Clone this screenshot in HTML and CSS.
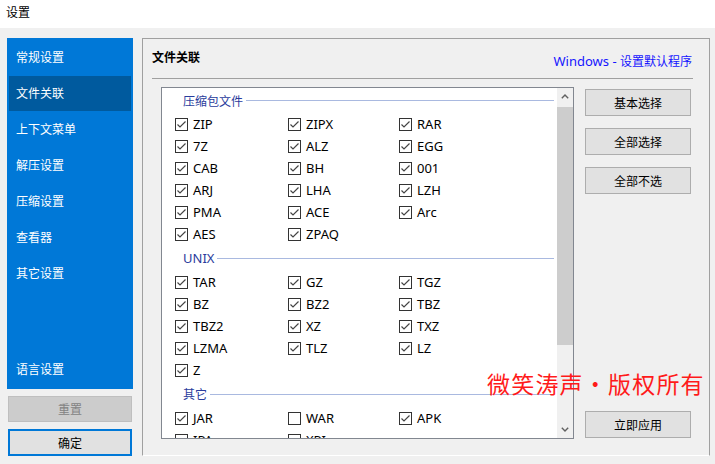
FILE: index.html
```html
<!DOCTYPE html>
<html lang="zh-CN">
<head>
<meta charset="utf-8">
<title>设置</title>
<link rel="stylesheet" href="styles.css">
</head>
<body>
<div class="window">
  <div class="titlebar">设置</div>
  <div class="main">
    <aside class="sidebar">
      <nav class="nav">
        <div class="nav-item">常规设置</div>
        <div class="nav-item active">文件关联</div>
        <div class="nav-item">上下文菜单</div>
        <div class="nav-item">解压设置</div>
        <div class="nav-item">压缩设置</div>
        <div class="nav-item">查看器</div>
        <div class="nav-item">其它设置</div>
        <div class="nav-item nav-bottom">语言设置</div>
      </nav>
      <button class="btn btn-reset">重置</button>
      <button class="btn btn-ok">确定</button>
    </aside>
    <section class="panel">
      <header class="panel-head">
        <h1 class="panel-title">文件关联</h1>
        <a class="panel-link"><span class="latin">Windows - </span>设置默认程序</a>
      </header>
      <div class="panel-body">
        <div class="listbox">
          <div class="list-content">
            <div class="group-head first"><span>压缩包文件</span></div>
            <div class="grid">
              <label class="cb"><span class="box"><svg viewBox="0 0 11 11"><path d="M1.5 5.5 L4 8 L9.5 2.5"/></svg></span>ZIP</label>
              <label class="cb"><span class="box"><svg viewBox="0 0 11 11"><path d="M1.5 5.5 L4 8 L9.5 2.5"/></svg></span>ZIPX</label>
              <label class="cb"><span class="box"><svg viewBox="0 0 11 11"><path d="M1.5 5.5 L4 8 L9.5 2.5"/></svg></span>RAR</label>
              <label class="cb"><span class="box"><svg viewBox="0 0 11 11"><path d="M1.5 5.5 L4 8 L9.5 2.5"/></svg></span>7Z</label>
              <label class="cb"><span class="box"><svg viewBox="0 0 11 11"><path d="M1.5 5.5 L4 8 L9.5 2.5"/></svg></span>ALZ</label>
              <label class="cb"><span class="box"><svg viewBox="0 0 11 11"><path d="M1.5 5.5 L4 8 L9.5 2.5"/></svg></span>EGG</label>
              <label class="cb"><span class="box"><svg viewBox="0 0 11 11"><path d="M1.5 5.5 L4 8 L9.5 2.5"/></svg></span>CAB</label>
              <label class="cb"><span class="box"><svg viewBox="0 0 11 11"><path d="M1.5 5.5 L4 8 L9.5 2.5"/></svg></span>BH</label>
              <label class="cb"><span class="box"><svg viewBox="0 0 11 11"><path d="M1.5 5.5 L4 8 L9.5 2.5"/></svg></span>001</label>
              <label class="cb"><span class="box"><svg viewBox="0 0 11 11"><path d="M1.5 5.5 L4 8 L9.5 2.5"/></svg></span>ARJ</label>
              <label class="cb"><span class="box"><svg viewBox="0 0 11 11"><path d="M1.5 5.5 L4 8 L9.5 2.5"/></svg></span>LHA</label>
              <label class="cb"><span class="box"><svg viewBox="0 0 11 11"><path d="M1.5 5.5 L4 8 L9.5 2.5"/></svg></span>LZH</label>
              <label class="cb"><span class="box"><svg viewBox="0 0 11 11"><path d="M1.5 5.5 L4 8 L9.5 2.5"/></svg></span>PMA</label>
              <label class="cb"><span class="box"><svg viewBox="0 0 11 11"><path d="M1.5 5.5 L4 8 L9.5 2.5"/></svg></span>ACE</label>
              <label class="cb"><span class="box"><svg viewBox="0 0 11 11"><path d="M1.5 5.5 L4 8 L9.5 2.5"/></svg></span>Arc</label>
              <label class="cb"><span class="box"><svg viewBox="0 0 11 11"><path d="M1.5 5.5 L4 8 L9.5 2.5"/></svg></span>AES</label>
              <label class="cb"><span class="box"><svg viewBox="0 0 11 11"><path d="M1.5 5.5 L4 8 L9.5 2.5"/></svg></span>ZPAQ</label>
            </div>
            <div class="group-head"><span class="latin">UNIX</span></div>
            <div class="grid">
              <label class="cb"><span class="box"><svg viewBox="0 0 11 11"><path d="M1.5 5.5 L4 8 L9.5 2.5"/></svg></span>TAR</label>
              <label class="cb"><span class="box"><svg viewBox="0 0 11 11"><path d="M1.5 5.5 L4 8 L9.5 2.5"/></svg></span>GZ</label>
              <label class="cb"><span class="box"><svg viewBox="0 0 11 11"><path d="M1.5 5.5 L4 8 L9.5 2.5"/></svg></span>TGZ</label>
              <label class="cb"><span class="box"><svg viewBox="0 0 11 11"><path d="M1.5 5.5 L4 8 L9.5 2.5"/></svg></span>BZ</label>
              <label class="cb"><span class="box"><svg viewBox="0 0 11 11"><path d="M1.5 5.5 L4 8 L9.5 2.5"/></svg></span>BZ2</label>
              <label class="cb"><span class="box"><svg viewBox="0 0 11 11"><path d="M1.5 5.5 L4 8 L9.5 2.5"/></svg></span>TBZ</label>
              <label class="cb"><span class="box"><svg viewBox="0 0 11 11"><path d="M1.5 5.5 L4 8 L9.5 2.5"/></svg></span>TBZ2</label>
              <label class="cb"><span class="box"><svg viewBox="0 0 11 11"><path d="M1.5 5.5 L4 8 L9.5 2.5"/></svg></span>XZ</label>
              <label class="cb"><span class="box"><svg viewBox="0 0 11 11"><path d="M1.5 5.5 L4 8 L9.5 2.5"/></svg></span>TXZ</label>
              <label class="cb"><span class="box"><svg viewBox="0 0 11 11"><path d="M1.5 5.5 L4 8 L9.5 2.5"/></svg></span>LZMA</label>
              <label class="cb"><span class="box"><svg viewBox="0 0 11 11"><path d="M1.5 5.5 L4 8 L9.5 2.5"/></svg></span>TLZ</label>
              <label class="cb"><span class="box"><svg viewBox="0 0 11 11"><path d="M1.5 5.5 L4 8 L9.5 2.5"/></svg></span>LZ</label>
              <label class="cb"><span class="box"><svg viewBox="0 0 11 11"><path d="M1.5 5.5 L4 8 L9.5 2.5"/></svg></span>Z</label>
            </div>
            <div class="group-head"><span>其它</span></div>
            <div class="grid">
              <label class="cb"><span class="box"><svg viewBox="0 0 11 11"><path d="M1.5 5.5 L4 8 L9.5 2.5"/></svg></span>JAR</label>
              <label class="cb"><span class="box"></span>WAR</label>
              <label class="cb"><span class="box"><svg viewBox="0 0 11 11"><path d="M1.5 5.5 L4 8 L9.5 2.5"/></svg></span>APK</label>
              <label class="cb"><span class="box"></span>IPA</label>
              <label class="cb"><span class="box"></span>XPI</label>
            </div>
          </div>
          <div class="scrollbar">
            <div class="sb-arrow"><svg viewBox="0 0 8 5"><path d="M0.8 4.2 L4 1 L7.2 4.2"/></svg></div>
            <div class="sb-track"><div class="sb-thumb"></div></div>
            <div class="sb-arrow"><svg viewBox="0 0 8 5"><path d="M0.8 0.8 L4 4 L7.2 0.8"/></svg></div>
          </div>
        </div>
        <div class="actions">
          <button class="btn btn-side">基本选择</button>
          <button class="btn btn-side">全部选择</button>
          <button class="btn btn-side">全部不选</button>
          <button class="btn btn-side btn-apply">立即应用</button>
        </div>
      </div>
    </section>
  </div>
  <div class="watermark">微笑涛声・版权所有</div>
</div>
</body>
</html>
```

FILE: styles.css
```css
* { box-sizing: border-box; }
html, body { margin: 0; padding: 0; }
body {
  width: 715px;
  height: 464px;
  overflow: hidden;
  background: #f0f0f0;
  font-family: "Segoe UI", "Noto Sans", "Noto Sans CJK SC", sans-serif;
  font-size: 12px;
  color: #000;
}
.window { position: relative; width: 715px; height: 464px; }
.latin { font-size: 13px; }
.titlebar {
  height: 28px;
  background: #fff;
  padding-left: 6px;
  line-height: 26px;
  font-size: 12px;
}
.main {
  display: flex;
  padding: 10px 0 0 7px;
  gap: 9px;
}
.sidebar {
  width: 126px;
  display: flex;
  flex-direction: column;
}
.nav {
  height: 351px;
  background: #0078d7;
  padding: 2px 2px 1px;
  display: flex;
  flex-direction: column;
}
.nav-item {
  height: 36px;
  line-height: 36px;
  padding-left: 7px;
  color: #fff;
  font-size: 12px;
}
.nav-item.active { background: #005a9e; height: 35px; margin-bottom: 1px; }
.nav-bottom { margin-top: auto; }
.btn {
  font-family: inherit;
  font-size: 12px;
  color: #000;
  background: #e1e1e1;
  border: 1px solid #adadad;
  padding: 0;
  margin: 0;
}
.btn-reset {
  margin: 7px 1px 0;
  height: 26px;
  background: #cccccc;
  border-color: #bfbfbf;
  color: #838383;
}
.btn-ok {
  margin: 7px 1px 0;
  height: 27px;
  border: 2px solid #0078d7;
}
.panel {
  width: 568px;
  height: 418px;
  border: 1px solid #a0a0a0;
  border-bottom-color: #ffffff;
  display: flex;
  flex-direction: column;
}
.panel-head {
  margin: 0 16px 0 9px;
  height: 40px;
  border-bottom: 1px solid #a0a0a0;
  display: flex;
  justify-content: space-between;
  align-items: flex-start;
}
.panel-title {
  margin: 9px 0 0;
  font-size: 12px;
  font-weight: bold;
  line-height: 20px;
}
.panel-link {
  margin: 12px 1px 0 0;
  line-height: 20px;
  color: #1515ff;
}
.panel-body {
  margin-top: 8px;
  padding-left: 18px;
  display: flex;
  gap: 11px;
}
.listbox {
  width: 413px;
  height: 352px;
  border: 1px solid #828790;
  background: #fff;
  display: flex;
}
.list-content {
  flex: 1;
  overflow: hidden;
}
.group-head {
  height: 26px;
  display: flex;
  align-items: center;
  padding-left: 21px;
  padding-right: 3px;
  color: #2a3c9c;
}
.group-head.first { height: 25px; }
.group-head::after {
  content: "";
  flex: 1;
  height: 1px;
  background: #a9b9e0;
  margin-left: 3px;
}
.grid {
  display: grid;
  grid-template-columns: 113px 111px 1fr;
  padding-left: 13px;
}
.cb {
  height: 22px;
  display: flex;
  align-items: center;
  gap: 5px;
  font-size: 13px;
}
.box {
  width: 13px;
  height: 13px;
  border: 1px solid #333;
  background: #fff;
  display: flex;
}
.box svg {
  width: 11px;
  height: 11px;
  fill: none;
  stroke: #444;
  stroke-width: 1.2;
}
.scrollbar {
  width: 16px;
  background: #f0f0f0;
  display: flex;
  flex-direction: column;
}
.sb-arrow {
  height: 17px;
  display: flex;
  align-items: center;
  justify-content: center;
}
.sb-arrow svg {
  width: 8px;
  height: 5px;
  fill: none;
  stroke: #606060;
  stroke-width: 1.4;
}
.sb-track { flex: 1; }
.sb-thumb {
  margin-top: 2px;
  height: 238px;
  background: #cdcdcd;
}
.actions {
  width: 106px;
  display: flex;
  flex-direction: column;
  gap: 12px;
  padding: 2px 0 1px;
}
.btn-side { height: 27px; }
.btn-apply { margin-top: auto; }
.watermark {
  position: absolute;
  left: 487px;
  top: 369px;
  font-family: "Noto Sans CJK SC", sans-serif;
  font-size: 23px;
  line-height: 28px;
  letter-spacing: 1.2px;
  color: #ff1a1a;
}
```
